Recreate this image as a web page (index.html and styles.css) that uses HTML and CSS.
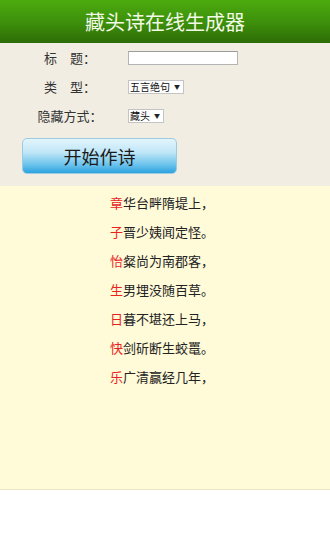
FILE: index.html
```html
<!DOCTYPE html>
<html lang="zh">
<head>
<meta charset="utf-8">
<title>藏头诗在线生成器</title>
<link rel="stylesheet" href="styles.css">
</head>
<body>
<header class="top">
  <h1 class="title">藏头诗在线生成器</h1>
</header>
<section class="form">
  <div class="row">
    <span class="label">标　题：</span>
    <span class="field"><input class="text" type="text"></span>
  </div>
  <div class="row">
    <span class="label">类　型：</span>
    <span class="field"><span class="select">五言绝句<span class="arrow">▼</span></span></span>
  </div>
  <div class="row">
    <span class="label">隐藏方式：</span>
    <span class="field"><span class="select">藏头<span class="arrow">▼</span></span></span>
  </div>
  <button class="btn" type="button">开始作诗</button>
</section>
<section class="poem">
  <p class="line"><span class="head">章</span>华台畔隋堤上，</p>
  <p class="line"><span class="head">子</span>晋少姨闻定怪。</p>
  <p class="line"><span class="head">怡</span>粲尚为南郡客，</p>
  <p class="line"><span class="head">生</span>男埋没随百草。</p>
  <p class="line"><span class="head">日</span>暮不堪还上马，</p>
  <p class="line"><span class="head">快</span>剑斫断生蛟鼍。</p>
  <p class="line"><span class="head">乐</span>广清赢经几年，</p>
</section>
</body>
</html>
```

FILE: styles.css
```css
html, body {
  margin: 0;
  padding: 0;
  background: #ffffff;
  font-family: "Noto Sans CJK SC", "Noto Sans", sans-serif;
  color: #222;
}
.top {
  height: 43px;
  background: linear-gradient(to bottom, #4cab0e 0%, #3c8e0b 55%, #2d6c07 100%);
  display: flex;
  align-items: center;
  justify-content: center;
}
.title {
  margin: 0;
  font-size: 20px;
  font-weight: normal;
  color: #f2f9e6;
  line-height: 1;
}
.form {
  background: #f1ede3;
  display: flex;
  flex-direction: column;
  height: 143px;
  box-sizing: border-box;
}
.row {
  display: flex;
  align-items: center;
  height: 29px;
}
.label {
  width: 128px;
  padding-left: 12px;
  box-sizing: border-box;
  text-align: center;
  font-size: 13px;
  color: #333;
}
.field {
  display: flex;
  align-items: center;
}
.text {
  width: 110px;
  height: 14px;
  box-sizing: border-box;
  border: 1px solid #b4b4b4;
  border-top-color: #9c9c9c;
  background: #fff;
  padding: 0;
  margin: 0;
}
.select {
  display: inline-flex;
  align-items: center;
  height: 14px;
  box-sizing: border-box;
  border: 1px solid #c4c4c4;
  background: #fff;
  font-size: 10px;
  line-height: 1;
  padding: 0 3px 0 1px;
  color: #111;
}
.arrow {
  font-size: 6px;
  margin-left: 4px;
  color: #222;
}
.btn {
  margin: 8px 0 0 22px;
  width: 155px;
  height: 36px;
  border: 1px solid #9ccbe2;
  border-radius: 5px;
  background: linear-gradient(to bottom, #e2f5fc 0%, #bfe6f7 40%, #6cc3ec 75%, #2ca3df 100%);
  font-family: "Noto Sans CJK SC", sans-serif;
  font-size: 18px;
  color: #1a1a1a;
  padding: 0;
  cursor: pointer;
}
.poem {
  background: #fffad8;
  height: 304px;
  border-bottom: 1px solid #ece5c4;
  padding-top: 2px;
  box-sizing: border-box;
  text-align: center;
}
.line {
  margin: 0;
  height: 29px;
  line-height: 29px;
  font-size: 13px;
  color: #222;
  padding-right: 6px;
}
.head {
  color: #e8231f;
}
```
